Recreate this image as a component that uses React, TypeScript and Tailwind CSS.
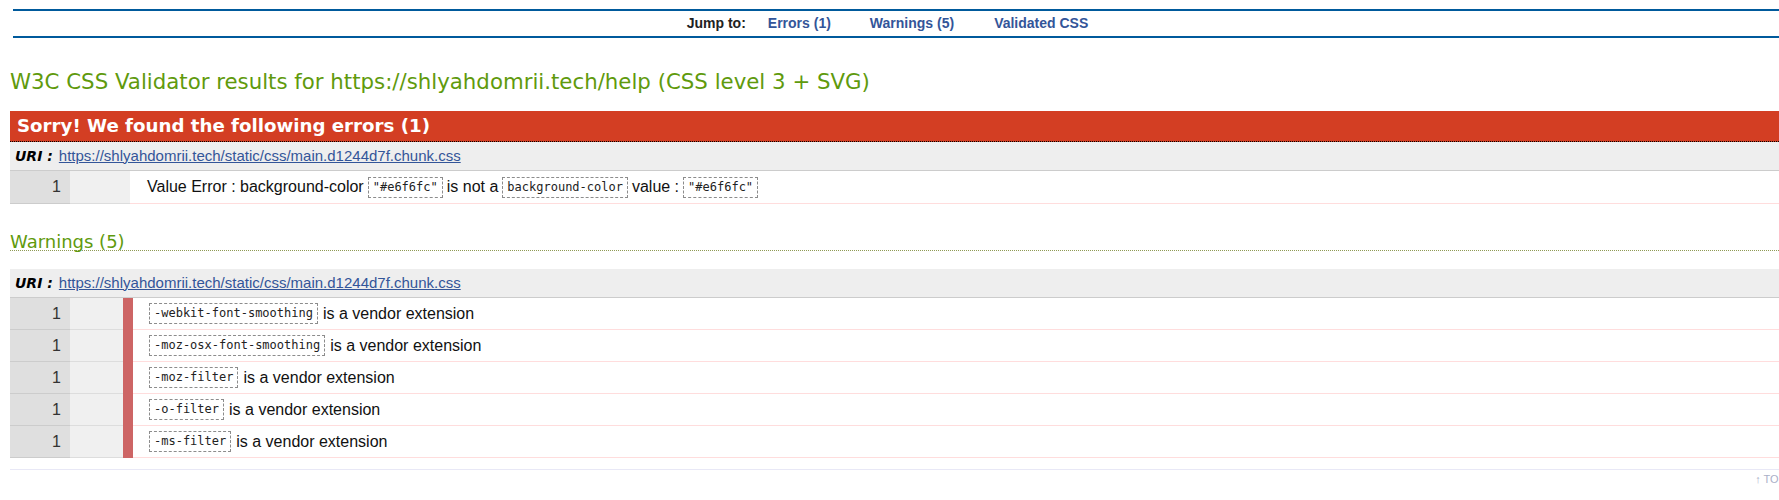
import React from "react";

const uri = "https://shlyahdomrii.tech/static/css/main.d1244d7f.chunk.css";

const warnings = [
  "-webkit-font-smoothing",
  "-moz-osx-font-smoothing",
  "-moz-filter",
  "-o-filter",
  "-ms-filter",
];

function Code({ children }: { children: React.ReactNode }) {
  return (
    <span className="inline-block border border-dashed border-[#8c8c8c] px-[4px] leading-[19px] text-[12px] font-['DejaVu_Sans_Mono',monospace] text-[#222]">
      {children}
    </span>
  );
}

function UriRow() {
  return (
    <div className="ml-[10px] h-[29px] bg-[#eeeeee] border-b border-[#cccccc] flex items-center pl-[5px] text-[15px]">
      <span className="font-bold italic text-black text-[14px] font-['DejaVu_Sans',sans-serif]">URI :</span>
      <a href="#" className="ml-[6px] text-[#335599] underline">
        {uri}
      </a>
    </div>
  );
}

export default function App() {
  return (
    <div className="w-full min-h-[500px] bg-white overflow-hidden font-['Liberation_Sans',Arial,sans-serif] text-[#111]">
      {/* jump bar */}
      <div className="ml-[13px] mt-[9px] h-[29px] border-y-2 border-[#005a9c] flex items-center justify-center pr-[17px] text-[14px] font-bold">
        <span className="text-[#222]">Jump to:</span>
        <a href="#" className="ml-[22px] text-[#335599]">Errors (1)</a>
        <a href="#" className="ml-[39px] text-[#335599]">Warnings (5)</a>
        <a href="#" className="ml-[40px] text-[#335599]">Validated CSS</a>
      </div>

      <h2 className="ml-[10px] mt-[32px] leading-[24px] text-[21.3px] font-['DejaVu_Sans',sans-serif] text-[#5f9a0d]">
        W3C CSS Validator results for https://shlyahdomrii.tech/help (CSS level 3 + SVG)
      </h2>

      {/* errors */}
      <div className="ml-[10px] mt-[17px] h-[31px] bg-[#d33e23] border-b border-dotted border-black flex items-center pl-[7px] text-[18.2px] font-bold text-white font-['DejaVu_Sans',sans-serif]">
        Sorry! We found the following errors (1)
      </div>
      <UriRow />
      <div className="ml-[10px] h-[33px] flex text-[16px]">
        <div className="w-[60px] bg-[#dfdfdf] border-b border-[#cccccc] flex items-center justify-end pr-[9px] text-[#333]">1</div>
        <div className="w-[60px] bg-[#f0f0f0] border-b border-[#dddddd]" />
        <div className="flex-1 border-b border-[#ffdddd] flex items-center gap-[4px] pl-[17px] whitespace-nowrap">
          <span>Value Error : background-color</span>
          <Code>"#e6f6fc"</Code>
          <span>is not a</span>
          <Code>background-color</Code>
          <span>value :</span>
          <Code>"#e6f6fc"</Code>
        </div>
      </div>

      {/* warnings */}
      <h2 className="ml-[10px] mt-[29px] leading-[17px] border-b border-dotted border-[#8f9a55] text-[18px] font-['DejaVu_Sans',sans-serif] text-[#5f9a0d]">
        Warnings (5)
      </h2>
      <div className="mt-[18px]">
        <UriRow />
      </div>
      <div className="ml-[10px] flex flex-col text-[16px]">
        {warnings.map((w) => (
          <div key={w} className="h-[32px] flex">
            <div className="w-[60px] bg-[#dfdfdf] border-b border-[#cccccc] flex items-center justify-end pr-[9px] text-[#333]">1</div>
            <div className="w-[53px] bg-[#f0f0f0] border-b border-[#dddddd]" />
            <div className="w-[10px] bg-[#cd6565]" />
            <div className="flex-1 border-b border-[#ffdddd] flex items-center gap-[5px] pl-[16px] whitespace-nowrap">
              <Code>{w}</Code>
              <span>is a vendor extension</span>
            </div>
          </div>
        ))}
      </div>

      <div className="ml-[10px] mt-[11px] border-t border-[#e8e8f6]" />
      <div className="flex justify-end mr-[-7px] mt-[2px]">
        <a href="#" className="text-[11px] leading-[14px] text-[#aab0c8]">↑ TOP</a>
      </div>
    </div>
  );
}
